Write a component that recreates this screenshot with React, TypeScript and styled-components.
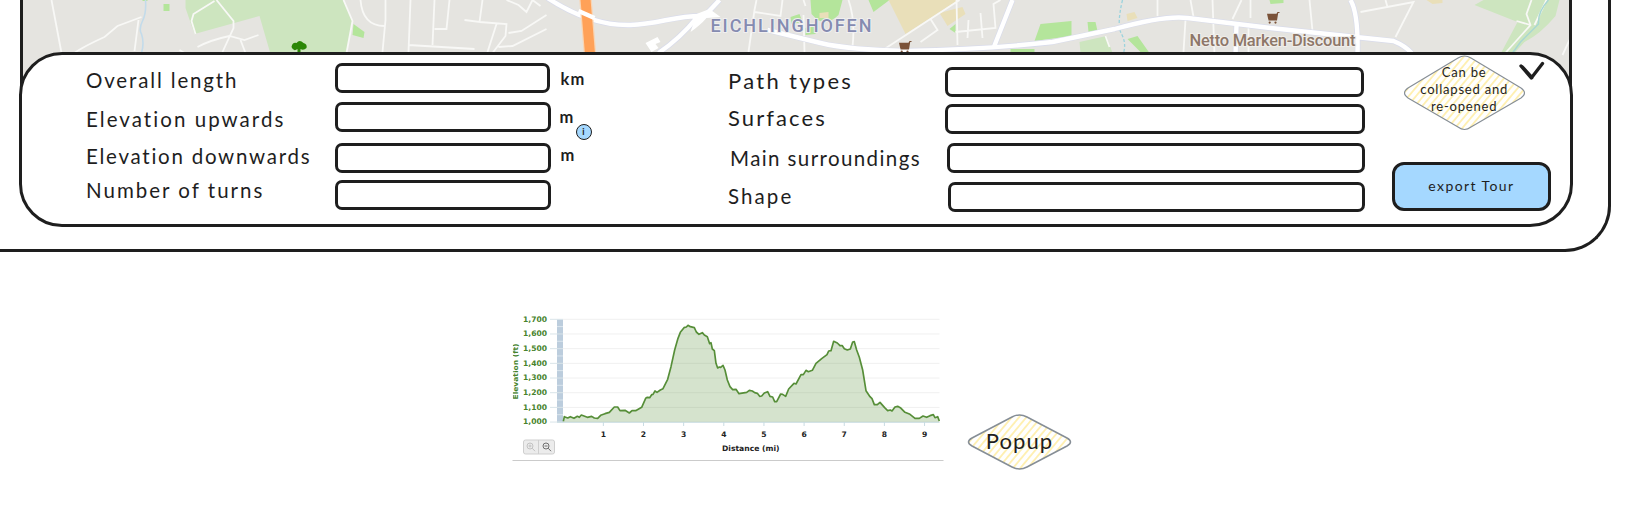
import React from 'react';
import styled, { createGlobalStyle } from 'styled-components';

const INK = '#1e1e1e';

const GlobalStyle = createGlobalStyle`
  * { box-sizing: border-box; }
  body { margin: 0; background: #fff; color: ${INK}; }
`;

const Page = styled.main`
  width: 1648px;
  height: 516px;
  overflow: hidden;
  background: #fff;
  font-family: Lato, 'Open Sans', sans-serif;
`;

const DeviceFrame = styled.section`
  width: 1611px;
  height: 251.5px;
  padding-left: 18.5px;
  border: solid ${INK};
  border-width: 0 3px 3px 0;
  border-bottom-right-radius: 46px;
`;

const MapView = styled.div`
  width: 1552px;
  height: 98px;
  margin-left: 1px;
  border: solid ${INK};
  border-width: 0 3px;
  overflow: hidden;
  svg { display: block; }
`;

const InfoPanel = styled.div`
  position: relative;
  display: flex;
  width: 1554px;
  height: 175px;
  margin-top: -46px;
  padding-left: 64.5px;
  background: #fff;
  border: 3px solid ${INK};
  border-radius: 43px;
`;

const FieldColumn = styled.div<{ $width: number; $top: number }>`
  width: ${(p) => p.$width}px;
  padding-top: ${(p) => p.$top}px;
  flex: none;
`;

const FieldRow = styled.div<{ $gap: number }>`
  display: flex;
  height: 30px;
  margin-bottom: ${(p) => p.$gap}px;
`;

const Label = styled.label<{ $width: number; $drop: number; $track: number; $indent?: number; $size?: number }>`
  width: ${(p) => p.$width}px;
  flex: none;
  margin-top: ${(p) => p.$drop}px;
  padding-left: ${(p) => p.$indent ?? 0}px;
  font-size: ${(p) => p.$size ?? 20.5}px;
  line-height: 30px;
  letter-spacing: ${(p) => p.$track}px;
  white-space: nowrap;
`;

const ValueBox = styled.div<{ $width: number }>`
  width: ${(p) => p.$width}px;
  height: 30px;
  flex: none;
  border: 3px solid ${INK};
  border-radius: 7px;
  background: #fff;
`;

const Unit = styled.span<{ $drop: number; $left: number }>`
  position: relative;
  height: 30px;
  margin: ${(p) => p.$drop}px 0 0 ${(p) => p.$left}px;
  font-size: 16.5px;
  font-weight: 700;
  line-height: 30px;
  letter-spacing: 1.2px;
`;

const InfoBadge = styled.span`
  position: absolute;
  left: 16px;
  top: 22.5px;
  width: 16px;
  height: 16px;
  border: 1px solid ${INK};
  border-radius: 50%;
  background: #a5d8ff;
  font-size: 9px;
  line-height: 14px;
  letter-spacing: 0;
  text-align: center;
`;

const Actions = styled.div`
  flex: none;
  width: 168px;
`;

const ActionTop = styled.div`
  display: flex;
  height: 106.5px;
  padding-left: 11px;
  svg { flex: none; }
`;

const CheckIcon = styled.svg`
  margin: 6px 0 0 -8px;
`;

const ExportButton = styled.button`
  display: block;
  width: 159.5px;
  height: 49.5px;
  padding: 0 0 1px;
  border: 3px solid ${INK};
  border-radius: 12px;
  background: #a5d8ff;
  color: ${INK};
  font: 14px Lato, sans-serif;
  letter-spacing: 1.4px;
`;

const NoteBox = styled.div<{ $w: number; $h: number }>`
  display: grid;
  flex: none;
  width: ${(p) => p.$w}px;
  height: ${(p) => p.$h}px;
  > * { grid-area: 1 / 1; }
`;

const NoteText = styled.div<{ $size: number; $line: number; $lift: number; $track: number }>`
  align-self: center;
  z-index: 1;
  padding-bottom: ${(p) => p.$lift}px;
  font-size: ${(p) => p.$size}px;
  line-height: ${(p) => p.$line}px;
  letter-spacing: ${(p) => p.$track}px;
  text-align: center;
  white-space: pre;
`;

const Lower = styled.section`
  display: flex;
  padding: 48px 0 0 500px;
`;

const PopupSlot = styled.div`
  padding: 114px 0 0 21px;
`;

type NoteProps = {
  id: string; w: number; h: number; size: number; line: number;
  lift: number; track: number; stroke: number; d: string; children: string;
};

function Note({ id, w, h, size, line, lift, track, stroke, d, children }: NoteProps) {
  return (
    <NoteBox $w={w} $h={h}>
      <svg width={w} height={h} viewBox={`0 0 ${w} ${h}`}>
        <defs>
          <pattern id={id} width="5.6" height="5.6" patternUnits="userSpaceOnUse" patternTransform="rotate(40)">
            <rect width="5.6" height="5.6" fill="#fff" />
            <path d="M2.8 0V5.6" stroke="#ffec99" strokeWidth="1.4" />
          </pattern>
        </defs>
        <path d={d} fill={`url(#${id})`} stroke="#868e96" strokeWidth={stroke} />
      </svg>
      <NoteText $size={size} $line={line} $lift={lift} $track={track}>{children}</NoteText>
    </NoteBox>
  );
}

const green = '#b4e59b';
const park = '#cde5bf';

function Cart({ x, y }: { x: number; y: number }) {
  return (
    <g transform={`translate(${x} ${y})`} fill="#7a5238">
      <path d="M0.5 1.8H10L11 0H13V1H11.7L10.5 8.4H2V7.6H1.8Z" />
      <circle cx="3.2" cy="10.6" r="1.1" />
      <circle cx="9" cy="10.6" r="1.1" />
    </g>
  );
}

function MapDrawing() {
  return (
    <svg width="1547" height="98" viewBox="22.5 0 1547 98">
      <rect x="22" width="1550" height="98" fill="#e5e4e0" />
      <g fill={park}>
        <path d="M185 0H343L352 21L346 54H270L259 16L194 34L185 8Z" />
        <path d="M1079 42L1106 36L1112 53H1080Z" />
        <path d="M1483 0H1559L1555 16Q1540 34 1524 42L1513 54H1500L1517 22L1474 5Z" />
      </g>
      <g fill={green}>
        <path d="M163 4h6v7h-6zM142 0h5v1h-5zM353 24L364 32L363 38L352 35Z" />
        <path d="M810 0H842L838 15Q828 25 817 20L811 14Z M868 0H889L873 12Z" />
        <path d="M1040 24L1071 21V36L1034 41Z M1087 22H1095L1097 31L1088 32Z M1127 39L1137 36L1149 53H1141Z M1010 49H1034V54H1010Z M1269 0H1283V3L1270 4Z" />
        <path d="M790 17L799 14L802 22L791 24Z M805 28L816 24L815 34L805 35Z M949 29L955 24V33Z" />
      </g>
      <g fill="#e9dfb9">
        <path d="M888 0H958L905 34Z" />
        <path d="M939 13L954 9L962 7L965 14L947 26Z M1126 14L1134 12L1137 18L1127 21Z M1426 0H1442V3L1432 4Z M819 13L828 12V18H819Z" />
      </g>
      <path d="M145 0Q146 13 142 21Q138 29 141 34Q144 43 141 53" fill="none" stroke="#c3dbea" strokeWidth="1.6" />
      <g fill="none" stroke="#f8f8f6" strokeWidth="1.8">
        <path d="M51 0L61 53M74 53Q82 47 104 37L117 26L141 17M138 20L134 51" />
        <path d="M214 1L193 14L191 21L195 34M216 0L233 21V28L222 52M197 47Q210 40 229 36L244 40L258 35M240 40L245 53M179 50L184 53" />
        <path d="M343 0L352 21L346 53M360 0Q362 26 384 26M385 0V20L382 52M410 0L408 52M434 0L432 45M449 0L446 29H434M482 0L479 22L464 20M479 22L506 24L505 36L492 53M496 24L487 52M508 33L521 31L546 15M498 47L512 46L546 29M408 45L474 49M506 0L518 5L526 12L532 0L540 6" />
        <path d="M756 0L754 10L748 52M754 12L780 16L782 0M803 0L805 6M803 15L804 52M848 0Q855 20 852 47M884 49L959 0M930 19L937 30L920 42M956 0L957 45M955 32L995 28L993 4L1000 0M968 20L967 38M980 13L982 38" />
        <path d="M1157 0V16M1190 0L1193 17M1185 20L1183 52M1212 0L1214 55M1241 0L1232 19M1250 0V18M1248 27V52M1309 0L1312 31M1360 12L1413 2L1395 37M1385 0L1387 7M1105 36L1109 47M1531 0L1526 14L1530 25L1504 54M1546 0L1534 25M1516 21L1530 25M1569 40L1562 55" />
      </g>
      <path d="M1122 0Q1116 25 1121 34T1123 53" fill="none" stroke="#9bd3dd" strokeWidth="1.3" strokeDasharray="3 2" />
      <path d="M1548 0Q1537 12 1538 24L1520 42L1512 53" fill="none" stroke="#a8d7d3" strokeWidth="1.5" />
      <g fill="none" stroke="#d9dceb" strokeWidth="5.8">
        <path d="M547 -2Q590 26 630 25C660 24 675 15 704 16L719 0M696 18Q680 38 658 53" />
        <path d="M767 30L820 43Q850 50 905 51Q990 49 1052 42L1114 29Q1165 15 1187 18L1270 28L1393 41Q1405 46 1411 53M993 48L1012 0M1350 0Q1358 14 1357 54M1236 25L1235 55" />
      </g>
      <g fill="none" stroke="#fff" strokeWidth="4.4">
        <path d="M547 -2Q590 26 630 25C660 24 675 15 704 16L719 0M696 18Q680 38 658 53" />
        <path d="M767 30L820 43Q850 50 905 51Q990 49 1052 42L1114 29Q1165 15 1187 18L1270 28L1393 41Q1405 46 1411 53M993 48L1012 0M1350 0Q1358 14 1357 54M1236 25L1235 55" />
      </g>
      <path d="M696 14L709 9L720 17L706 18Q700 25 690 32Z" fill="#fff" />
      <path d="M645 43L657 37L660 42L655 44L658 48L651 52Z" fill="#fff" />
      <path d="M585 -1L589.5 54" stroke="#f8d5b4" strokeWidth="12.5" />
      <path d="M585 -1L589.5 54" stroke="#ffa158" strokeWidth="10" />
      <path d="M578 11L594 18" stroke="#fff" strokeWidth="4.4" />
      <path d="M291 47Q292 42 296 43Q299 39 303 43Q307 44 306 48Q303 51 300 49V54H297V49Q293 52 291 47" fill="#2b8706" />
      <Cart x={898} y={41} />
      <Cart x={1266} y={12} />
      <text x="710" y="32" textLength="161" fontFamily="Roboto, sans-serif" fontSize="18" fontWeight="500" fill="#858bb0" stroke="#f0eff0" strokeWidth="2" paintOrder="stroke">EICHLINGHOFEN</text>
      <text x="1189" y="46" textLength="166" fontFamily="Roboto, sans-serif" fontSize="16.5" fontWeight="500" fill="#8d7769" stroke="#f0eeea" strokeWidth="2" paintOrder="stroke">Netto Marken-Discount</text>
    </svg>
  );
}

const profile =
  '190,364 193,350 203,354 211,350 222,355 232,349 238,352 244,345 262,352 275,349 283,354 293,355 302,346 315,341 328,337 343,321 353,321 360,332 375,331 388,339 396,332 407,332 425,322 437,295 442,292 449,293 455,284 459,283 465,273 471,277 481,270 489,266 503,238 513,200 524,150 534,115 541,97 552,83 559,81 564,76 571,80 583,83 589,96 597,103 607,98 613,105 622,110 629,131 633,128 637,147 643,152 648,190 653,204 658,201 662,202 669,196 675,210 682,240 690,260 698,269 708,268 717,281 740,277 748,271 757,273 764,278 772,280 779,289 785,288 793,279 803,275 810,289 818,291 824,305 830,305 842,282 848,283 857,289 866,267 882,250 888,252 903,224 910,224 918,211 925,215 937,211 948,190 965,176 981,164 986,153 993,152 1001,124 1012,129 1020,137 1027,137 1033,146 1042,150 1051,147 1058,126 1063,125 1070,150 1078,172 1088,210 1098,272 1110,290 1116,296 1123,314 1132,314 1140,307 1154,323 1163,332 1171,330 1176,333 1185,321 1193,319 1201,323 1215,337 1230,343 1245,355 1258,355 1269,348 1280,352 1290,347 1300,344 1305,353 1313,350 1318,363';

const elevations = ['1,700', '1,600', '1,500', '1,400', '1,300', '1,200', '1,100', '1,000'];

function ElevationChart() {
  return (
    <svg width="446" height="170" viewBox="0 0 446 170" fontFamily="'DejaVu Sans', sans-serif" fontWeight="700" fontSize="7.6">
      <rect x="57" y="19.5" width="6" height="102.5" fill="#bccddd" />
      {elevations.map((value, i) => {
        const y = 19.3 + i * 14.68;
        return (
          <g key={value}>
            <path d={`M63 ${y}H439.5`} stroke="#f0f0f0" />
            <path d={`M50 ${y}H63`} stroke="#d9e4e9" />
            {i < 7 && <path d={`M57 ${y + 7.3}h6`} stroke="#e3ecf3" strokeWidth=".8" />}
            <text x="47" y={y + 2.2} textAnchor="end" textLength="24" lengthAdjust="spacingAndGlyphs" fill="#47832c">{value}</text>
          </g>
        );
      })}
      <g transform="scale(.33333)">
        <polygon points={`190,366 ${profile} 1318,366`} fill="rgba(86, 142, 56, .25)" />
        <polyline points={profile} fill="none" stroke="#568e38" strokeWidth="5" strokeLinejoin="round" />
      </g>
      <path d="M57 122.3H439.5" stroke="#c9dce2" />
      {[1, 2, 3, 4, 5, 6, 7, 8, 9].map((mile) => {
        const x = 63.2 + mile * 40.15;
        return (
          <g key={mile}>
            <path d={`M${x} 122V126`} stroke="#c9dce2" />
            <text x={x} y="137.4" textAnchor="middle" fill="#222">{mile}</text>
          </g>
        );
      })}
      <text x="222" y="151" textLength="57.5" lengthAdjust="spacingAndGlyphs" fill="#222">Distance (mi)</text>
      <text transform="translate(17.5 99.5) rotate(-90)" textLength="56" lengthAdjust="spacingAndGlyphs" fontSize="7" fill="#47832c">Elevation (ft)</text>
      <rect x="11" y="42" width="1.8" height="60" fill="#fff" />
      <rect x="23.5" y="140" width="31" height="14" rx="2" fill="#ececec" stroke="#cfcfcf" />
      <path d="M38.5 140V154" stroke="#cfcfcf" />
      <g fill="none" stroke="#c2c2c2">
        <circle cx="30" cy="146" r="3" /><path d="M32.2 148.2L35 151.2M28.5 146h3M30 144.5v3" />
      </g>
      <g fill="none" stroke="#707070">
        <circle cx="46" cy="146" r="3" /><path d="M48.2 148.2L51 151.2M44.5 146h3" />
      </g>
      <path d="M12.5 160.5H443.5" stroke="#cbcbcb" />
    </svg>
  );
}

const leftFields = [
  { label: 'Overall length', drop: 2, track: 1.85, gap: 9, width: 215, unit: 'km', unitDrop: 1, unitLeft: 10.5 },
  { label: 'Elevation upwards', drop: 2, track: 2.05, gap: 11, width: 216, unit: 'm', unitDrop: 0, unitLeft: 8.5, info: true },
  { label: 'Elevation downwards', drop: -2, track: 1.75, gap: 7, width: 216, unit: 'm', unitDrop: -2.5, unitLeft: 9.5 },
  { label: 'Number of turns', drop: -5, track: 2, gap: 0, width: 216 },
];

const rightFields = [
  { label: 'Path types', drop: -0.5, track: 2.3, gap: 7, left: 217, width: 418.5, size: 22 },
  { label: 'Surfaces', drop: -1, track: 2.1, gap: 9, left: 217, width: 420, size: 22 },
  { label: 'Main surroundings', drop: 0.5, track: 1.4, gap: 9, left: 219, width: 418, indent: 2 },
  { label: 'Shape', drop: -0.5, track: 2.1, gap: 0, left: 220, width: 417 },
];

export default function App() {
  return (
    <Page>
      <GlobalStyle />
      <DeviceFrame>
        <MapView><MapDrawing /></MapView>
        <InfoPanel>
          <FieldColumn $width={642} $top={7.5}>
            {leftFields.map((f) => (
              <FieldRow key={f.label} $gap={f.gap}>
                <Label $width={249} $drop={f.drop} $track={f.track}>{f.label}</Label>
                <ValueBox $width={f.width} />
                {f.unit && (
                  <Unit $drop={f.unitDrop ?? 0} $left={f.unitLeft ?? 0}>
                    {f.unit}
                    {f.info && <InfoBadge>i</InfoBadge>}
                  </Unit>
                )}
              </FieldRow>
            ))}
          </FieldColumn>
          <FieldColumn $width={663.7} $top={11.5}>
            {rightFields.map((f) => (
              <FieldRow key={f.label} $gap={f.gap}>
                <Label $width={f.left} $drop={f.drop} $track={f.track} $indent={f.indent} $size={f.size}>{f.label}</Label>
                <ValueBox $width={f.width} />
              </FieldRow>
            ))}
          </FieldColumn>
          <Actions>
            <ActionTop>
              <Note
                id="hatch-collapse" w={123} h={76} size={13} line={17} lift={7} track={0.8} stroke={1.1}
                d="M55 3Q61.5 -1 68 3L118 33Q125 38 118 43L68 72Q61.5 77 55 72L5 43Q-2 38 5 33Z"
              >{'Can be\ncollapsed and\nre-opened'}</Note>
              <CheckIcon width="28" height="20" viewBox="0 0 28 20">
                <path d="M3 5L13.3 17L24.5 2.5M4.5 6L14 16.5" fill="none" stroke={INK} strokeWidth="3.3" strokeLinecap="round" strokeLinejoin="round" />
              </CheckIcon>
            </ActionTop>
            <ExportButton>export Tour</ExportButton>
          </Actions>
        </InfoPanel>
      </DeviceFrame>
      <Lower>
        <ElevationChart />
        <PopupSlot>
          <Note
            id="hatch-popup" w={105} h={56} size={22} line={26} lift={1} track={1.1} stroke={1.5}
            d="M45 3Q52.5 -1 60 3L100 24Q107 28 100 32L60 53Q52.5 57 45 53L5 32Q-2 28 5 24Z"
          >Popup</Note>
        </PopupSlot>
      </Lower>
    </Page>
  );
}
